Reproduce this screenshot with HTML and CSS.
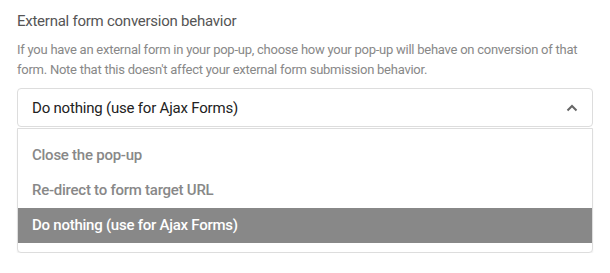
FILE: index.html
```html
<!DOCTYPE html>
<html>
<head>
<meta charset="utf-8">
<link rel="stylesheet" href="styles.css">
</head>
<body>
<div class="field">
  <div class="label">External form conversion behavior</div>
  <p class="desc">If you have an external form in your pop-up, choose how your pop-up will behave on conversion of that form. Note that this doesn't affect your external form submission behavior.</p>
  <div class="select">
    <div class="select-box">
      <span class="value">Do nothing (use for Ajax Forms)</span>
      <svg class="chevron" width="12" height="8" viewBox="0 0 12 8"><path d="M1.5 6.5 L6 2 L10.5 6.5" fill="none" stroke="#666" stroke-width="2"/></svg>
    </div>
    <ul class="menu">
      <li class="option">Close the pop-up</li>
      <li class="option">Re-direct to form target URL</li>
      <li class="option selected">Do nothing (use for Ajax Forms)</li>
    </ul>
  </div>
</div>
</body>
</html>
```
FILE: styles.css
```css
html, body {
  margin: 0;
  padding: 0;
  background: #fff;
}
body {
  font-family: Roboto, "Liberation Sans", sans-serif;
}
.field {
  width: 576px;
  padding: 11px 0 0 17px;
}
.label {
  font-size: 15px;
  line-height: 20px;
  letter-spacing: -0.25px;
  color: #555;
}
.desc {
  margin: 9px 0 0;
  font-size: 13px;
  line-height: 19.5px;
  letter-spacing: -0.25px;
  color: #888;
}
.select {
  margin-top: 9px;
}
.select-box {
  box-sizing: border-box;
  height: 39px;
  border: 1px solid #ddd;
  border-radius: 4px;
  display: flex;
  align-items: center;
  justify-content: space-between;
  padding: 0 14px 0 14px;
  font-size: 15px;
  letter-spacing: -0.2px;
  color: #222;
}
.chevron {
  display: block;
}
.menu {
  margin: 1px 0 0;
  padding: 9px 0;
  list-style: none;
  background: #fff;
  border: 1px solid #ddd;
  border-radius: 0 0 4px 4px;
  box-shadow: 0 2px 2px rgba(0,0,0,0.06);
}
.option {
  height: 35px;
  line-height: 35px;
  padding: 0 14px;
  font-size: 15px;
  font-weight: 500;
  letter-spacing: -0.25px;
  color: #888;
}
.option.selected {
  background: #888;
  color: #fff;
}
```
